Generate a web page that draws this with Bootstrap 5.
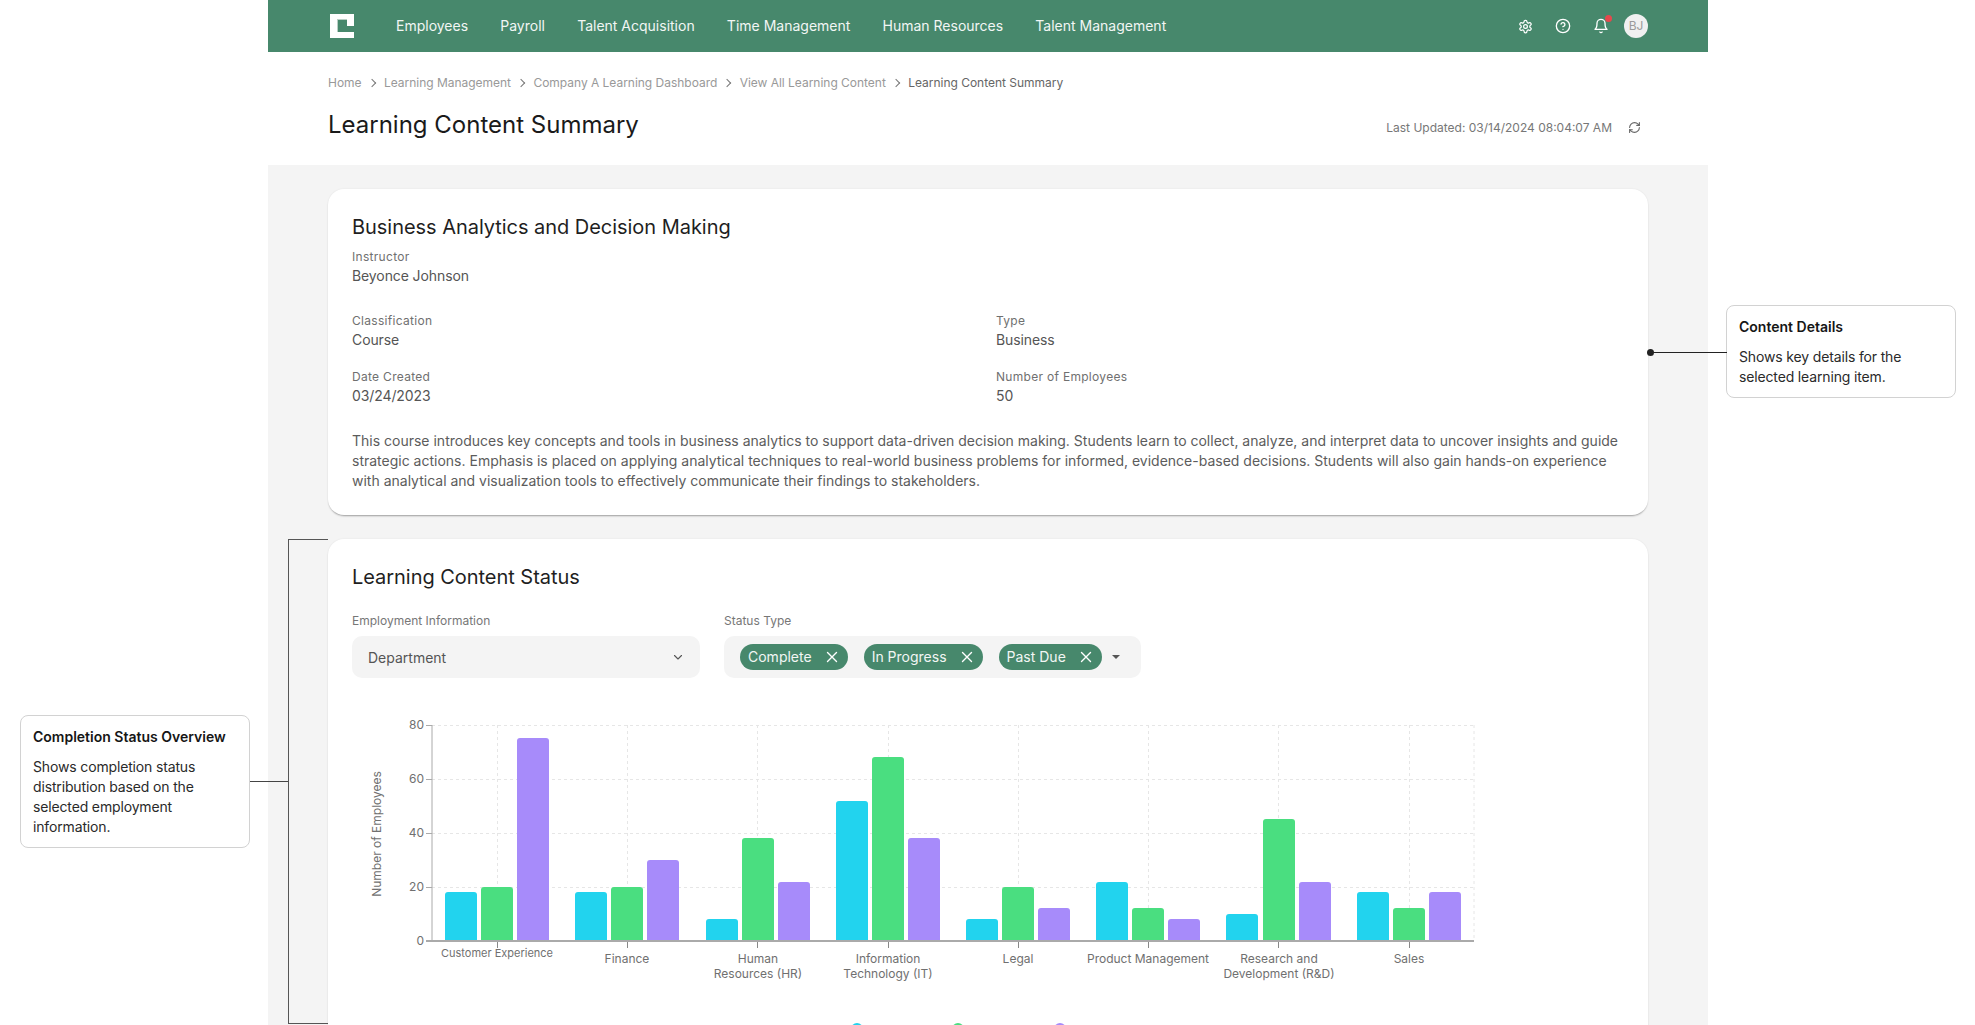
<!DOCTYPE html>
<html lang="en">
<head>
<meta charset="utf-8">
<title>Learning Content Summary</title>
<link href="https://cdn.jsdelivr.net/npm/bootstrap@5.3.0/dist/css/bootstrap.min.css" rel="stylesheet">
<style>
html,body{height:100%;overflow:hidden}
body{font-family:Inter,"Liberation Sans",sans-serif;background:#fff;color:#555;font-size:14px}
.stage{height:1025px;overflow:hidden}
.side-l{width:268px;flex:none;position:relative;z-index:2}
.side-r{width:267px;flex:none;position:relative;z-index:2}
.app{width:1440px;flex:none}
.note{border:1px solid #d2d2d2;border-radius:8px;background:#fff;color:#2a2a2a;line-height:20px;position:relative}
.note-l{width:230px;margin:715px 0 0 20px;padding:11px 12px 10px}
.note-r{width:230px;margin:305px 0 0 18px;padding:11px 12px 10px}
.note-t{font-weight:600;font-size:14px;color:#161616;margin-bottom:10px}
.note-b{font-size:14px;letter-spacing:-.15px}
.link-l{position:absolute;left:229px;top:65px;width:38px;height:1px;background:#444}
.bracket{position:absolute;left:288px;top:539px;width:40px;height:485px;border:1px solid #555;border-right:0}
.link-r{position:absolute;left:-77px;top:46px;width:77px;height:1px;background:#222}
.link-r::before{content:"";position:absolute;left:-3px;top:-3px;width:7px;height:7px;border-radius:50%;background:#222}
.topbar{--bs-navbar-nav-link-padding-x:0;background:#47886c;height:52px;padding:0 60px 0 62px}
.topbar .navbar-brand{margin:0 42px 0 0;padding:0;line-height:0}
.topbar .nav-link{color:#f2f6f4;font-size:14px;padding:0;line-height:20px}
.top-nav{gap:32.2px}
.tool{color:#fff;line-height:0}
.tools{gap:22px}
.bell-wrap{position:relative}
.bell-dot{position:absolute;right:-3px;top:-3px;width:7px;height:7px;border-radius:50%;background:#e5484d}
.avatar{width:24px;height:24px;border-radius:50%;background:#f0f0f0;color:#9a9a9a;font-size:12px;margin-left:-7px}
.head{height:113px;padding:0 60px;background:#fff}
.crumbs{--bs-breadcrumb-margin-bottom:0;font-size:12px;line-height:16px;padding-top:23px;letter-spacing:-.02px}
.crumbs a{color:#999;text-decoration:none}
.crumbs .active{color:#666}
.crumbs .breadcrumb-item+.breadcrumb-item{padding-left:0}
.crumbs .breadcrumb-item+.breadcrumb-item::before{content:"";float:none;display:inline-block;width:6px;height:6px;padding:0;border-top:1px solid #777;border-right:1px solid #777;transform:rotate(45deg);margin:0 9.4px 1px 7px}
.page-t{font-size:24px;font-weight:400;color:#1a1a1a;line-height:32px;margin:0}
.stamp{font-size:12px;color:#777;gap:16px;margin-right:7px}
.title-row{margin-top:18px}
.stamp-row{margin-top:5px}
.body-area{background:#f4f4f4;padding:24px 60px;min-height:860px}
.panel{border:0;border-radius:16px;box-shadow:0 2px 2px -1px rgba(0,0,0,.35),0 0 2px rgba(0,0,0,.08);--bs-card-bg:#fff;margin-bottom:24px}
.panel .card-body{padding:24px}
.panel-t{font-size:20px;font-weight:400;color:#1f1f1f;line-height:28px;margin:0 0 8px;letter-spacing:-.04px}
.lab{font-size:12px;line-height:16px;color:#707070;margin-bottom:1px;letter-spacing:.3px}
.val{font-size:14px;line-height:20px;color:#555;letter-spacing:-.1px}
.desc{font-size:14px;line-height:20px;color:#5c5c5c;margin:25px 0 0}
.r1{margin-bottom:27px}
.r2{margin-bottom:19px}
.lab-gap{margin-bottom:7px;letter-spacing:0;color:#777}
.pick{background:#f4f4f4;border-radius:10px;height:42px}
.pick-a{width:348px;padding:0 16px;color:#555}
.pick-b{width:417px;padding:0 16px;gap:16px}
.pill{background:#47886c;color:#f2f6f4;border-radius:13px;height:26px;padding:0 10px 0 8px;font-weight:400;font-size:14px;gap:14px}
.caret-ic{margin-left:-6px}
.field-row{gap:24px;margin-top:22px}
.chart{display:block;margin-top:23px}
.chart text{font-family:Inter,"Liberation Sans",sans-serif;font-size:12px;fill:#707070}
.chart .squeezed{font-size:11px}
</style>
</head>
<body>
<div class="stage d-flex">
  <aside class="side-l">
    <div class="note note-l">
      <div class="note-t">Completion Status Overview</div>
      <div class="note-b">Shows completion status distribution based on the selected employment information.</div>
      <span class="link-l"></span>
    </div>
    <span class="bracket"></span>
  </aside>
  <div class="app">
    <nav class="navbar navbar-expand topbar">
      <div class="d-flex align-items-center w-100">
        <a class="navbar-brand" href="#" aria-label="Home">
          <svg width="24" height="24" viewBox="0 0 24 24"><path fill="#fff" d="M0 0h24v12H17V5H7v13h17v6H0z"/><path fill="#b9cfc5" d="M7 5h10v1H8v12H7z"/></svg>
        </a>
        <ul class="navbar-nav top-nav">
          <li class="nav-item"><a class="nav-link" href="#">Employees</a></li>
          <li class="nav-item"><a class="nav-link" href="#">Payroll</a></li>
          <li class="nav-item"><a class="nav-link" href="#">Talent Acquisition</a></li>
          <li class="nav-item"><a class="nav-link" href="#">Time Management</a></li>
          <li class="nav-item"><a class="nav-link" href="#">Human Resources</a></li>
          <li class="nav-item"><a class="nav-link" href="#">Talent Management</a></li>
        </ul>
        <div class="d-flex align-items-center ms-auto tools">
          <span class="tool"><svg width="15" height="15" viewBox="0 0 24 24" fill="none" stroke="currentColor" stroke-width="2" stroke-linecap="round" stroke-linejoin="round"><path d="M12.22 2h-.44a2 2 0 0 0-2 2v.18a2 2 0 0 1-1 1.73l-.43.25a2 2 0 0 1-2 0l-.15-.08a2 2 0 0 0-2.73.73l-.22.38a2 2 0 0 0 .73 2.73l.15.1a2 2 0 0 1 1 1.72v.51a2 2 0 0 1-1 1.74l-.15.09a2 2 0 0 0-.73 2.73l.22.38a2 2 0 0 0 2.73.73l.15-.08a2 2 0 0 1 2 0l.43.25a2 2 0 0 1 1 1.73V20a2 2 0 0 0 2 2h.44a2 2 0 0 0 2-2v-.18a2 2 0 0 1 1-1.73l.43-.25a2 2 0 0 1 2 0l.15.08a2 2 0 0 0 2.73-.73l.22-.39a2 2 0 0 0-.73-2.73l-.15-.08a2 2 0 0 1-1-1.74v-.5a2 2 0 0 1 1-1.74l.15-.09a2 2 0 0 0 .73-2.73l-.22-.38a2 2 0 0 0-2.73-.73l-.15.08a2 2 0 0 1-2 0l-.43-.25a2 2 0 0 1-1-1.73V4a2 2 0 0 0-2-2z"/><circle cx="12" cy="12" r="3"/></svg></span>
          <span class="tool"><svg width="16" height="16" viewBox="0 0 24 24" fill="none" stroke="currentColor" stroke-width="2" stroke-linecap="round" stroke-linejoin="round"><circle cx="12" cy="12" r="10"/><path d="M9.09 9a3 3 0 0 1 5.83 1c0 2-3 3-3 3"/><path d="M12 17h.01"/></svg></span>
          <span class="tool bell-wrap"><svg width="16" height="16" viewBox="0 0 24 24" fill="none" stroke="currentColor" stroke-width="2" stroke-linecap="round" stroke-linejoin="round"><path d="M6 8a6 6 0 0 1 12 0c0 7 3 9 3 9H3s3-2 3-9"/><path d="M10.3 21a1.94 1.94 0 0 0 3.4 0"/></svg><span class="bell-dot"></span></span>
          <span class="avatar d-flex align-items-center justify-content-center">BJ</span>
        </div>
      </div>
    </nav>
    <header class="head">
      <ol class="breadcrumb crumbs">
        <li class="breadcrumb-item"><a href="#">Home</a></li>
        <li class="breadcrumb-item"><a href="#">Learning Management</a></li>
        <li class="breadcrumb-item"><a href="#">Company A Learning Dashboard</a></li>
        <li class="breadcrumb-item"><a href="#">View All Learning Content</a></li>
        <li class="breadcrumb-item active">Learning Content Summary</li>
      </ol>
      <div class="d-flex justify-content-between title-row">
        <h1 class="page-t">Learning Content Summary</h1>
        <div class="d-flex align-items-center stamp stamp-row">
          <span>Last Updated: 03/14/2024 08:04:07 AM</span>
          <svg width="13" height="13" viewBox="0 0 24 24" fill="none" stroke="#666" stroke-width="2" stroke-linecap="round" stroke-linejoin="round"><path d="M3 12a9 9 0 0 1 9-9 9.75 9.75 0 0 1 6.74 2.74L21 8"/><path d="M21 3v5h-5"/><path d="M21 12a9 9 0 0 1-9 9 9.75 9.75 0 0 1-6.74-2.74L3 16"/><path d="M8 16H3v5"/></svg>
        </div>
      </div>
    </header>
    <main class="body-area">
      <section class="card panel">
        <div class="card-body">
          <h2 class="panel-t">Business Analytics and Decision Making</h2>
          <div class="r1"><div class="lab">Instructor</div><div class="val">Beyonce Johnson</div></div>
          <div class="row gx-3 r2">
            <div class="col-6"><div class="lab">Classification</div><div class="val">Course</div></div>
            <div class="col-6"><div class="lab">Type</div><div class="val">Business</div></div>
          </div>
          <div class="row gx-3">
            <div class="col-6"><div class="lab">Date Created</div><div class="val">03/24/2023</div></div>
            <div class="col-6"><div class="lab">Number of Employees</div><div class="val">50</div></div>
          </div>
          <p class="desc">This course introduces key concepts and tools in business analytics to support data-driven decision making. Students learn to collect, analyze, and interpret data to uncover insights and guide strategic actions. Emphasis is placed on applying analytical techniques to real-world business problems for informed, evidence-based decisions. Students will also gain hands-on experience with analytical and visualization tools to effectively communicate their findings to stakeholders.</p>
        </div>
      </section>
      <section class="card panel">
        <div class="card-body">
          <h2 class="panel-t">Learning Content Status</h2>
          <div class="d-flex field-row">
            <div>
              <div class="lab lab-gap">Employment Information</div>
              <div class="pick pick-a d-flex align-items-center justify-content-between">
                <span>Department</span>
                <svg width="12" height="12" viewBox="0 0 12 12" fill="none" stroke="#555" stroke-width="1.1" stroke-linecap="round" stroke-linejoin="round"><path d="M2.5 4.5 6 8l3.5-3.5"/></svg>
              </div>
            </div>
            <div>
              <div class="lab lab-gap">Status Type</div>
              <div class="pick pick-b d-flex align-items-center">
                <span class="badge pill d-inline-flex align-items-center">Complete<svg width="12" height="12" viewBox="0 0 12 12" fill="none" stroke="#fff" stroke-width="1.4" stroke-linecap="round"><path d="M1.5 1.5l9 9M10.5 1.5l-9 9"/></svg></span>
                <span class="badge pill d-inline-flex align-items-center">In Progress<svg width="12" height="12" viewBox="0 0 12 12" fill="none" stroke="#fff" stroke-width="1.4" stroke-linecap="round"><path d="M1.5 1.5l9 9M10.5 1.5l-9 9"/></svg></span>
                <span class="badge pill d-inline-flex align-items-center">Past Due<svg width="12" height="12" viewBox="0 0 12 12" fill="none" stroke="#fff" stroke-width="1.4" stroke-linecap="round"><path d="M1.5 1.5l9 9M10.5 1.5l-9 9"/></svg></span>
                <svg class="caret-ic" width="8" height="4" viewBox="0 0 8 4"><path d="M0 0h8L4 4z" fill="#555"/></svg>
              </div>
            </div>
          </div>
          <svg class="chart" width="1272" height="340" viewBox="352 700 1272 340" role="img" aria-label="Number of Employees by department">
            <defs><clipPath id="plot"><rect x="432" y="700" width="1042" height="240"/></clipPath></defs>
            <g stroke="#e6e6e6" stroke-dasharray="3 3" fill="none">
              <path d="M432 724.5H1474M432 778.5H1474M432 832.5H1474M432 886.5H1474"/>
              <path d="M497.5 724V940M627.5 724V940M757.5 724V940M888.5 724V940M1018.5 724V940M1148.5 724V940M1278.5 724V940M1409.5 724V940M1474 724V940"/>
            </g>
            <g clip-path="url(#plot)">
              <g fill="#22d3ee">
                <rect x="445" y="891" width="32" height="54" rx="3"/><rect x="575" y="891" width="32" height="54" rx="3"/><rect x="706" y="918" width="32" height="27" rx="3"/><rect x="836" y="800" width="32" height="145" rx="3"/><rect x="966" y="918" width="32" height="27" rx="3"/><rect x="1096" y="881" width="32" height="64" rx="3"/><rect x="1226" y="913" width="32" height="32" rx="3"/><rect x="1357" y="891" width="32" height="54" rx="3"/>
              </g>
              <g fill="#4ade80">
                <rect x="481" y="886" width="32" height="59" rx="3"/><rect x="611" y="886" width="32" height="59" rx="3"/><rect x="742" y="837" width="32" height="108" rx="3"/><rect x="872" y="756" width="32" height="189" rx="3"/><rect x="1002" y="886" width="32" height="59" rx="3"/><rect x="1132" y="907" width="32" height="38" rx="3"/><rect x="1263" y="818" width="32" height="127" rx="3"/><rect x="1393" y="907" width="32" height="38" rx="3"/>
              </g>
              <g fill="#a78bfa">
                <rect x="517" y="737" width="32" height="208" rx="3"/><rect x="647" y="859" width="32" height="86" rx="3"/><rect x="778" y="881" width="32" height="64" rx="3"/><rect x="908" y="837" width="32" height="108" rx="3"/><rect x="1038" y="907" width="32" height="38" rx="3"/><rect x="1168" y="918" width="32" height="27" rx="3"/><rect x="1299" y="881" width="32" height="64" rx="3"/><rect x="1429" y="891" width="32" height="54" rx="3"/>
              </g>
            </g>
            <path d="M432 724V941M426 724.5H432M426 778.5H432M426 832.5H432M426 886.5H432" stroke="#aaa" fill="none"/>
            <path d="M426 940H1474" stroke="#aaa" stroke-width="2" fill="none"/>
            <path d="M497.5 941v6M627.5 941v6M757.5 941v6M888.5 941v6M1018.5 941v6M1148.5 941v6M1278.5 941v6M1409.5 941v6" stroke="#888" fill="none"/>
            <g text-anchor="end">
              <text x="424" y="728">80</text><text x="424" y="782">60</text><text x="424" y="836">40</text><text x="424" y="890">20</text><text x="424" y="944">0</text>
            </g>
            <text transform="translate(381 833) rotate(-90)" text-anchor="middle">Number of Employees</text>
            <g text-anchor="middle">
              <text class="squeezed" x="497" y="956">Customer Experience</text>
              <text x="627" y="962">Finance</text>
              <text x="758" y="962">Human</text><text x="758" y="977">Resources (HR)</text>
              <text x="888" y="962">Information</text><text x="888" y="977">Technology (IT)</text>
              <text x="1018" y="962">Legal</text>
              <text x="1148" y="962">Product Management</text>
              <text x="1279" y="962">Research and</text><text x="1279" y="977">Development (R&amp;D)</text>
              <text x="1409" y="962">Sales</text>
            </g>
            <circle cx="857" cy="1028" r="6" fill="#22d3ee"/><circle cx="958" cy="1028" r="6" fill="#4ade80"/><circle cx="1060" cy="1028" r="6" fill="#a78bfa"/>
          </svg>
        </div>
      </section>
    </main>
  </div>
  <aside class="side-r">
    <div class="note note-r">
      <span class="link-r"></span>
      <div class="note-t">Content Details</div>
      <div class="note-b">Shows key details for the selected learning item.</div>
    </div>
  </aside>
</div>
<script src="https://cdn.jsdelivr.net/npm/bootstrap@5.3.0/dist/js/bootstrap.bundle.min.js"></script>
</body>
</html>
